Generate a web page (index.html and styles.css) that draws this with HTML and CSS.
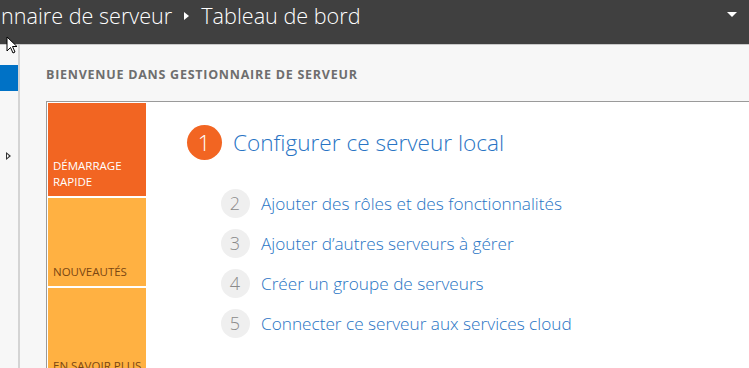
FILE: index.html
```html
<!DOCTYPE html>
<html lang="fr">
<head>
  <meta charset="UTF-8" />
  <title>Gestionnaire de serveur</title>
  <link rel="stylesheet" href="styles.css">
</head>
<body>
  <header class="topbar">
    <div class="crumbs">
      <span>nnaire de serveur</span>
      <span class="sep"></span>
      <span>Tableau de bord</span>
    </div>
    <span class="menu-arrow"></span>
  </header>

  <div class="layout">
    <aside class="sidebar">
      <div class="nav-active"></div>
      <div class="nav-expand"></div>
    </aside>

    <main class="main">
      <h1 class="welcome">BIENVENUE DANS GESTIONNAIRE DE SERVEUR</h1>

      <section class="panel">
        <div class="tiles">
          <div class="tile tile-start">DÉMARRAGE<br>RAPIDE</div>
          <div class="tile tile-news">NOUVEAUTÉS</div>
          <div class="tile tile-more">EN SAVOIR PLUS</div>
        </div>

        <div class="steps">
          <div class="step step-main">
            <span class="num">1</span>
            <a href="#">Configurer ce serveur local</a>
          </div>
          <div class="step">
            <span class="num">2</span>
            <a href="#">Ajouter des rôles et des fonctionnalités</a>
          </div>
          <div class="step">
            <span class="num">3</span>
            <a href="#">Ajouter d’autres serveurs à gérer</a>
          </div>
          <div class="step">
            <span class="num">4</span>
            <a href="#">Créer un groupe de serveurs</a>
          </div>
          <div class="step">
            <span class="num">5</span>
            <a href="#">Connecter ce serveur aux services cloud</a>
          </div>
        </div>
      </section>
    </main>
  </div>

  <!-- mouse pointer over the top left corner -->
  <svg class="pointer" width="14" height="20" viewBox="0 0 14 20">
    <path d="M1 1 L1 15 L4.5 11.5 L7 17 L9 16 L6.5 10.5 L11 10.5 Z" fill="#fff" stroke="#000" stroke-width="1"/>
  </svg>
</body>
</html>
```

FILE: styles.css
```css
:root {
  --bar-bg: #404040;
  --page-bg: #f7f7f7;
  --blue: #2874c4;
  --orange: #f26522;
  --amber: #ffb142;
  --grey-text: #6e6e6e;
}

* {
  margin: 0;
  padding: 0;
  box-sizing: border-box;
}

html, body {
  width: 100%;
  height: 100%;
  overflow: hidden;
  background: var(--page-bg);
  font-family: "Open Sans", "Noto Sans", sans-serif;
}

.topbar {
  height: 45px;
  background: var(--bar-bg);
  border-bottom: 1px solid #c9c9c9;
  display: flex;
  justify-content: space-between;
  padding-top: 1px;
  color: #fff;
}

.crumbs {
  display: flex;
  align-items: baseline;
  gap: 12px;
  font-size: 21.6px;
  font-weight: 300;
  margin-left: 1px;
  white-space: nowrap;
}

.sep {
  width: 0;
  height: 0;
  border-top: 4px solid transparent;
  border-bottom: 4px solid transparent;
  border-left: 5px solid #fff;
  align-self: center;
  margin-top: -14px;
}

.menu-arrow {
  width: 0;
  height: 0;
  margin: 11px 12px 0 0;
  border-left: 5px solid transparent;
  border-right: 5px solid transparent;
  border-top: 5px solid #fff;
}

.layout {
  display: flex;
  height: calc(100% - 45px);
}

.sidebar {
  width: 20px;
  flex-shrink: 0;
  border-right: 2px solid #d4d4d4;
  padding-top: 20px;
}

.nav-active {
  width: 18px;
  height: 26px;
  background: #0072c6;
}

.nav-expand {
  width: 0;
  height: 0;
  margin: 61px 0 0 6px;
  border-top: 4px solid transparent;
  border-bottom: 4px solid transparent;
  border-left: 5px solid #333;
  position: relative;
}

.nav-expand::after {
  content: "";
  position: absolute;
  left: -4px;
  top: -2px;
  border-top: 2px solid transparent;
  border-bottom: 2px solid transparent;
  border-left: 2px solid #fff;
}

.main {
  flex: 1;
  padding: 21px 0 0 26px;
}

.welcome {
  font-size: 12.5px;
  font-weight: 700;
  color: var(--grey-text);
  letter-spacing: 0.75px;
  height: 35px;
}

.panel {
  display: flex;
  background: #fff;
  border-top: 1px solid #9a9a9a;
  border-left: 1px solid #9a9a9a;
  padding: 1px 0 0 1px;
  height: 300px;
}

.tiles {
  width: 98px;
  display: flex;
  flex-direction: column;
  gap: 2px;
}

.tile {
  padding: 0 0 6px 5px;
  display: flex;
  align-items: flex-end;
  font-size: 11.5px;
  line-height: 16px;
}

.tile-start {
  height: 93px;
  background: var(--orange);
  color: #fff;
}

.tile-news {
  height: 88px;
  background: var(--amber);
  color: #7a4612;
}

.tile-more {
  height: 86px;
  background: var(--amber);
  color: #7a4612;
  padding-bottom: 0;
  margin-bottom: -6px;
}

.steps {
  padding: 21px 0 0 40.5px;
  display: flex;
  flex-direction: column;
}

.step {
  display: flex;
  align-items: center;
  gap: 11.5px;
  height: 40px;
  margin-left: 34px;
}

.step a {
  color: var(--blue);
  text-decoration: none;
  font-size: 17.2px;
  font-weight: 300;
}

.num {
  width: 29px;
  height: 29px;
  border-radius: 50%;
  background: #efefef;
  color: #8a8a8a;
  font-size: 18px;
  font-weight: 300;
  display: flex;
  align-items: center;
  justify-content: center;
}

.step-main {
  margin-left: 0;
  height: 36px;
  margin-bottom: 23px;
}

.step-main .num {
  width: 35px;
  height: 35px;
  background: var(--orange);
  color: #fff;
  font-size: 22px;
}

.step-main a {
  font-size: 22.6px;
}

.pointer {
  position: absolute;
  left: 6px;
  top: 36px;
}
```
